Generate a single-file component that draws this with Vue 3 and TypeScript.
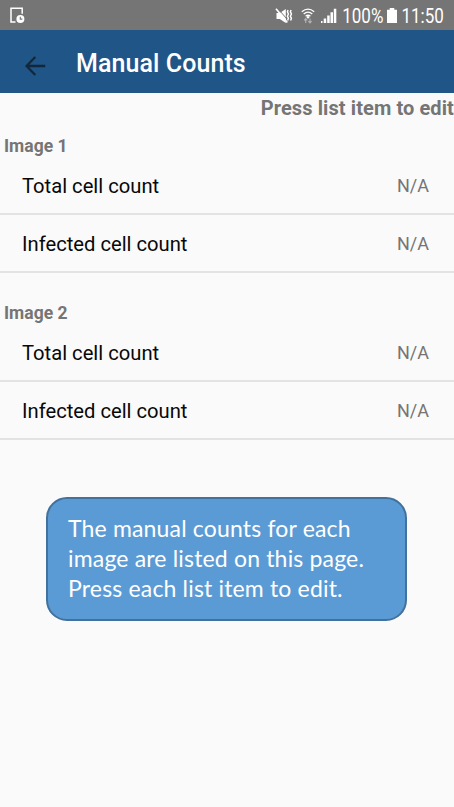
<script setup lang="ts">
interface CountItem {
  label: string
  value: string
}

interface ImageSection {
  title: string
  items: CountItem[]
}

const sections: ImageSection[] = [1, 2].map((n) => ({
  title: `Image ${n}`,
  items: [
    { label: 'Total cell count', value: 'N/A' },
    { label: 'Infected cell count', value: 'N/A' },
  ],
}))

const calloutLines: string[] = [
  'The manual counts for each',
  'image are listed on this page.',
  'Press each list item to edit.',
]
</script>

<template>
  <div class="screen">
    <div class="status">
      <svg class="doc" width="16" height="17" viewBox="0 0 16 17">
        <path d="M5.5 15H1V1.300h11.200v5.500" fill="none" stroke="#fff" stroke-width="1.500" />
        <circle cx="10.400" cy="11.900" r="4" fill="#fff" />
        <path d="M10.300 9.700v2.400h2" fill="none" stroke="#757575" stroke-width="1.100" />
      </svg>
      <div class="tray">
        <svg class="mute" width="18" height="16" viewBox="0 0 18 16">
          <path d="M1.500 5h3.300L10.800 1v14L4.800 11H1.500z" fill="#fff" />
          <path d="M3 .8L13 12.200" stroke="#757575" stroke-width="1" />
          <path d="M1 .8L12.300 14.500" stroke="#fff" stroke-width="1.700" />
          <path d="M13 2l-.6 1.800 1 2.200-1 2.200 1 2.200-.8 2.200M16 2l-.6 1.800 1 2.200-1 2.200 1 2.200-.8 2.200" fill="none" stroke="#fff" stroke-width="1.500" />
        </svg>
        <svg class="wifi" width="14" height="16" viewBox="0 0 14 16">
          <g fill="none" stroke="#fff" stroke-width="1.300">
            <path d="M.8 3.700Q7-1.500 13.200 3.700" />
            <path d="M2.700 6Q7 2.300 11.300 6" />
            <path d="M4.600 8.300Q7 6.200 9.400 8.300" />
          </g>
          <circle cx="7" cy="9.300" r="1.200" fill="#fff" />
          <path d="M4.700 15v-4.300M3.100 12.300l1.600-1.700 1.600 1.700M9 10.500v4.300M7.400 13.200L9 14.900l1.600-1.700" fill="none" stroke="#b4b4b4" stroke-width="1.100" />
        </svg>
        <svg class="signal" width="16" height="16" viewBox="0 0 16 16">
          <path d="M0 13h1.500v2H0zM2.700 10.500h2.500V15H2.700zM6.200 7.500h2.500V15H6.200zM9.500 4.300H12V15H9.500zM12.800 .8h2.500V15h-2.500z" fill="#fff" />
        </svg>
        <span class="percent">100%</span>
        <svg class="battery" width="10" height="15" viewBox="0 0 10 15">
          <path d="M2.700 0h4.600v1.700H10V15H0V1.700h2.700z" fill="#fff" />
        </svg>
        <span class="clock">11:50</span>
      </div>
    </div>

    <header class="appbar">
      <svg class="back" width="21" height="20" viewBox="0 0 21 20">
        <path d="M20.200 10H1.800M10.300 1L1.500 10l8.800 9" fill="none" stroke="#12273a" stroke-width="2.300" />
      </svg>
      <h1 class="title">Manual Counts</h1>
    </header>

    <main>
      <p class="hint">Press list item to edit</p>
      <section v-for="section in sections" :key="section.title" class="group">
        <h2 class="group-title">{{ section.title }}</h2>
        <div v-for="item in section.items" :key="item.label" class="row">
          <span class="label">{{ item.label }}</span>
          <span class="value">{{ item.value }}</span>
        </div>
      </section>
      <div class="callout">
        <div v-for="line in calloutLines" :key="line">{{ line }}</div>
      </div>
    </main>
  </div>
</template>

<style>
body {
  background: #fafafa;
}
</style>

<style scoped>
.screen {
  width: 454px;
  height: 807px;
  overflow: hidden;
  background: #fafafa;
  font-family: Roboto, sans-serif;
}

.status {
  display: flex;
  align-items: center;
  justify-content: space-between;
  box-sizing: border-box;
  height: 30px;
  padding: 1px 10px 0;
  background: #757575;
  color: #fff;
}

.tray {
  display: flex;
  align-items: center;
  font-size: 20px;
  line-height: 28px;
  white-space: nowrap;
}

.wifi {
  margin-left: 8px;
}

.signal {
  margin-left: 6px;
}

.percent,
.clock {
  transform: scaleX(0.85);
  transform-origin: right center;
}

.percent {
  margin-left: -2px;
}

.battery {
  margin-left: 4px;
}

.clock {
  margin-left: -3px;
}

.appbar {
  display: flex;
  align-items: center;
  box-sizing: border-box;
  height: 63px;
  padding-left: 25px;
  background: #205588;
}

.back {
  margin-top: 8px;
}

.title {
  margin: 4px 0 0 30px;
  color: #fff;
  font-size: 25px;
  font-weight: 500;
  line-height: 30px;
  letter-spacing: 0.08px;
}

.hint {
  height: 38px;
  margin: 0;
  padding-top: 3px;
  box-sizing: border-box;
  color: #757575;
  font-size: 20px;
  font-weight: 700;
  line-height: 24px;
  letter-spacing: 0.1px;
  text-align: right;
  white-space: nowrap;
}

.group {
  height: 166.5px;
}

.group-title {
  height: 26px;
  margin: 0;
  padding-left: 4px;
  color: #757575;
  font-size: 17.5px;
  font-weight: 700;
  line-height: 30px;
}

.row {
  display: flex;
  align-items: center;
  justify-content: space-between;
  box-sizing: border-box;
  height: 58px;
  padding: 2px 25px 0 22px;
  border-bottom: 2px solid #e3e3e3;
}

.label {
  color: #080808;
  font-size: 20.2px;
}

.value {
  margin-top: -1px;
  color: #757575;
  font-size: 18px;
}

.callout {
  box-sizing: border-box;
  width: 361px;
  height: 124px;
  margin: 33px 0 0 46px;
  padding: 14px 20px;
  border: 2px solid #41719c;
  border-radius: 21px;
  background: #5b9bd5;
  color: #fff;
  font-family: Lato, sans-serif;
  font-size: 23px;
  line-height: 30px;
  letter-spacing: 0.17px;
  white-space: nowrap;
}
</style>
